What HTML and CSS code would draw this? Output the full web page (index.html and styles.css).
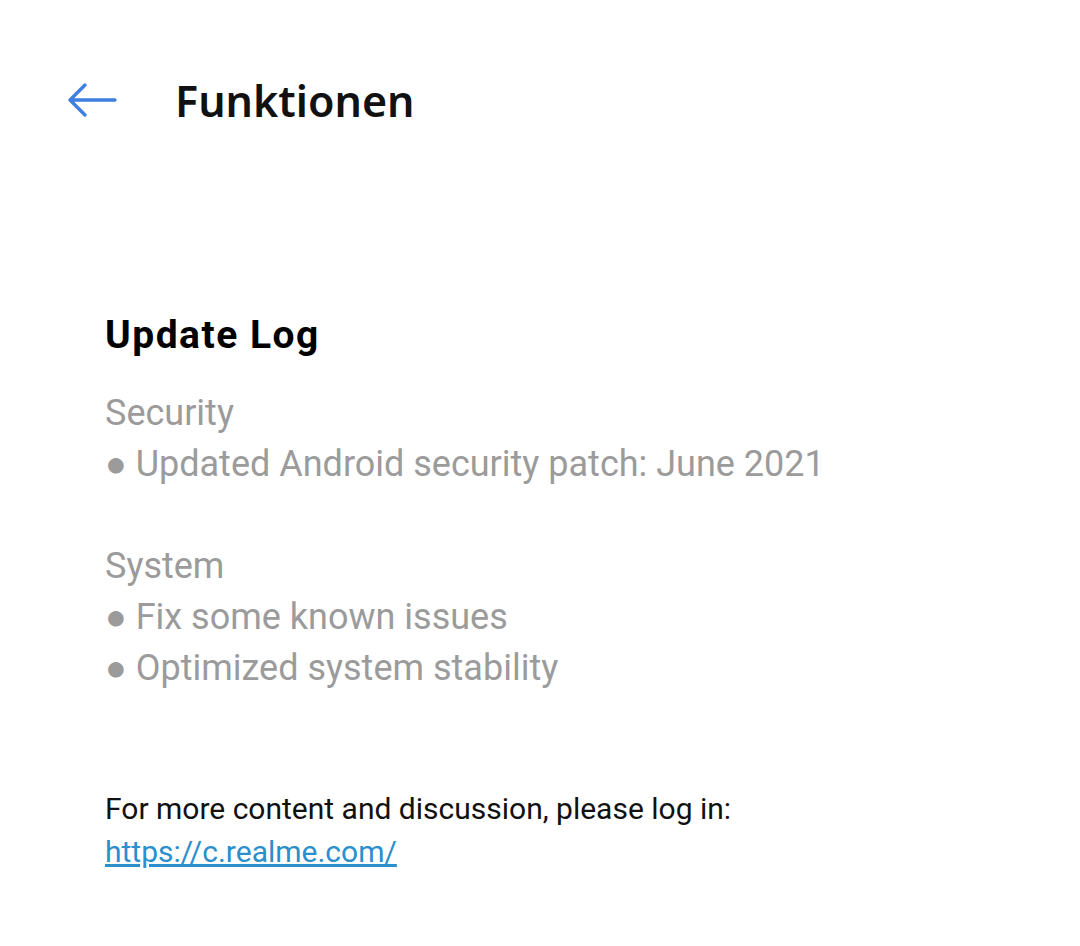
FILE: index.html
```html
<!DOCTYPE html>
<html lang="de">
<head>
    <meta charset="UTF-8">
    <meta name="viewport" content="width=device-width, initial-scale=1.0">
    <title>Funktionen</title>
    <link rel="stylesheet" href="styles.css">
</head>
<body>
    <div class="header">
        <span class="back">
            <svg width="52" height="36" viewBox="0 0 52 36">
                <path d="M49 18 H4 M19 3 L4 18 L19 33" fill="none" stroke="#3f7fe0" stroke-width="3.4" stroke-linecap="round" stroke-linejoin="round"/>
            </svg>
        </span>
        <h1>Funktionen</h1>
    </div>

    <div class="content">
        <h2>Update Log</h2>
        <div class="log">
            <p>Security</p>
            <p>● Updated Android security patch: June 2021</p>
            <p>&nbsp;</p>
            <p>System</p>
            <p>● Fix some known issues</p>
            <p>● Optimized system stability</p>
        </div>
        <div class="more">
            <p>For more content and discussion, please log in:</p>
            <a href="#">https://c.realme.com/</a>
        </div>
    </div>
</body>
</html>
```

FILE: styles.css
```css
body{
    margin: 0;
    background-color: #ffffff;
    font-family: Roboto, "Liberation Sans", sans-serif;
}
.header{
    display: flex;
    align-items: center;
    height: 200px;
    padding-left: 66px;
}
.back{
    display: flex;
    width: 109px;
}
.header h1{
    margin: 0;
    font-family: "Noto Sans", Roboto, sans-serif;
    font-weight: 600;
    font-size: 43px;
    color: #111;
}
.content{
    padding: 109px 0 0 105px;
}
.content h2{
    margin: 0 0 27px 0;
    font-size: 39px;
    font-weight: 700;
    letter-spacing: 1.5px;
    color: #000;
    line-height: 52px;
}
.log p{
    margin: 0;
    font-size: 36px;
    line-height: 51px;
    color: #9b9b9b;
}
.more{
    margin-top: 93px;
    font-size: 30px;
    line-height: 43px;
}
.more p{
    margin: 0;
    color: #111;
}
.more a{
    color: #2a8fcb;
}
```
